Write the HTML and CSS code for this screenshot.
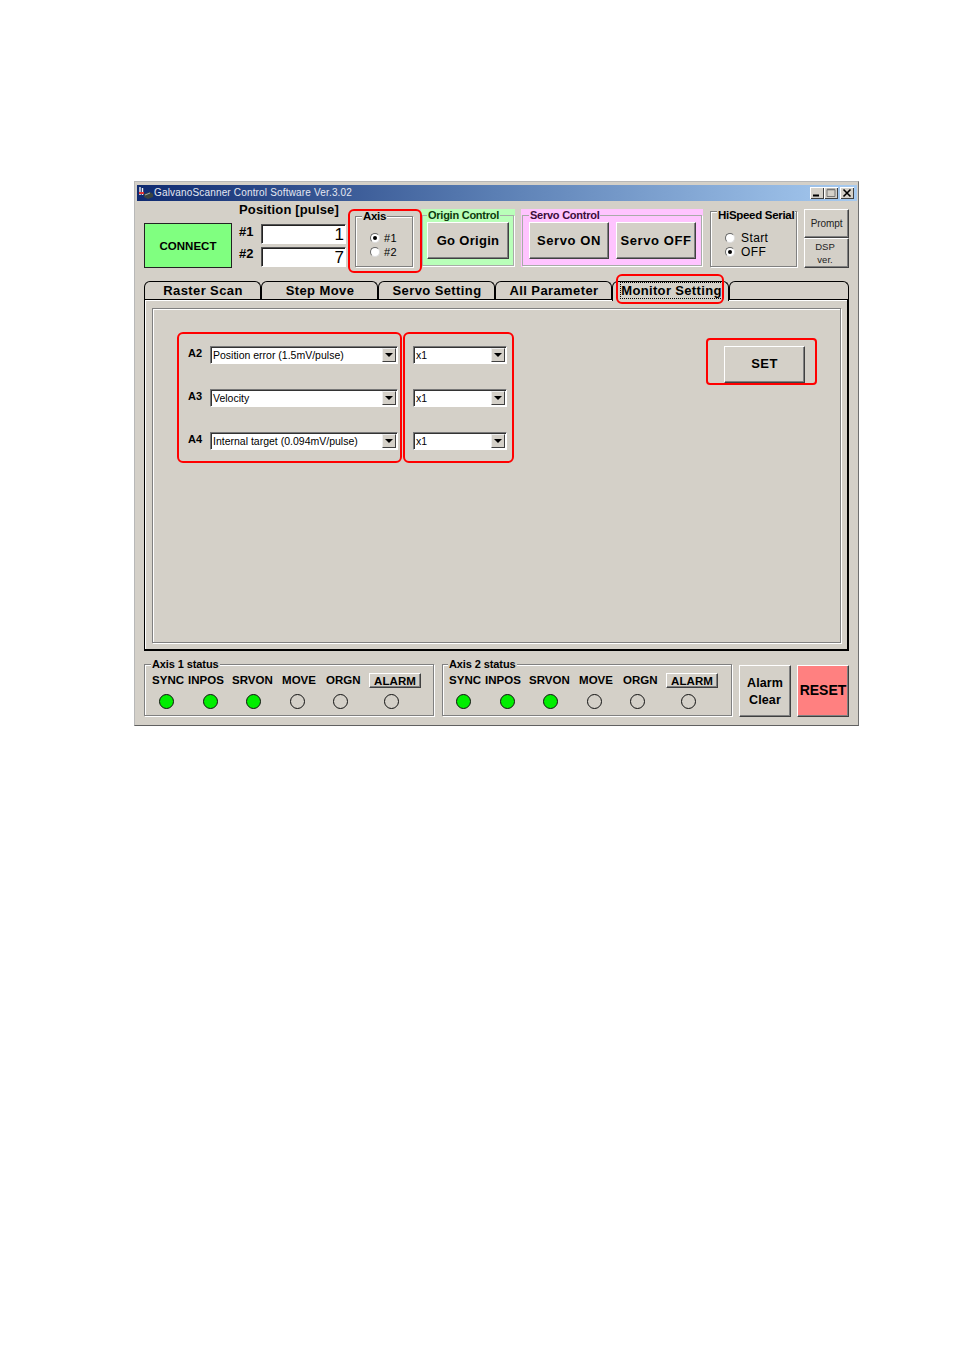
FILE: index.html
```html
<!DOCTYPE html>
<html lang="en">
<head>
<meta charset="utf-8">
<title>GalvanoScanner Control Software</title>
<link rel="stylesheet" href="styles.css">
</head>
<body>
<div class="window">
  <div class="titlebar">
    <svg class="app-icon" width="16" height="14" viewBox="0 0 16 14"><path d="M2 1v8M4.5 2v7" stroke="#f0f0f0" stroke-width="1.4"/><path d="M1 7h5" stroke="#d33" stroke-width="2"/><path d="M6 8l6-2 3 2v3l-5 2-4-2z" fill="#3c4440"/><path d="M7 9l5-2" stroke="#9aa"/></svg>
    <span class="title-text">GalvanoScanner Control Software Ver.3.02</span>
    <div class="win-btns">
      <span class="win-btn"><svg width="14" height="12" viewBox="0 0 14 12"><path d="M3 8.5h6" stroke="#000" stroke-width="2"/></svg></span>
      <span class="win-btn"><svg width="14" height="12" viewBox="0 0 14 12"><path d="M3 2.5h8v7H3z" fill="none" stroke="#777"/><path d="M3 2.5h8" stroke="#777" stroke-width="1.6"/></svg></span>
      <span class="win-btn win-close"><svg width="14" height="12" viewBox="0 0 14 12"><path d="M3.5 2.5l7 7M10.5 2.5l-7 7" stroke="#000" stroke-width="1.6"/></svg></span>
    </div>
  </div>

  <div class="top-row">
    <button class="btn connect">CONNECT</button>
    <div class="position">
      <div class="pos-title">Position [pulse]</div>
      <div class="pos-row"><span class="pos-label">#1</span><span class="field">1</span></div>
      <div class="pos-row"><span class="pos-label">#2</span><span class="field">7</span></div>
    </div>
    <div class="group axis">
      <span class="legend">Axis</span>
      <div class="radio-row"><span class="radio on"></span>#1</div>
      <div class="radio-row"><span class="radio"></span>#2</div>
    </div>
    <div class="tint tint-green">
      <div class="group tint-group">
        <span class="legend legend-green">Origin Control</span>
        <button class="btn big go-origin">Go Origin</button>
      </div>
    </div>
    <div class="tint tint-pink">
      <div class="group tint-group servo">
        <span class="legend legend-pink">Servo Control</span>
        <button class="btn big servo-btn">Servo ON</button>
        <button class="btn big servo-btn">Servo OFF</button>
      </div>
    </div>
    <div class="group hispeed">
      <span class="legend">HiSpeed Serial</span>
      <div class="radio-row big-radio"><span class="radio"></span>Start</div>
      <div class="radio-row big-radio"><span class="radio on"></span>OFF</div>
    </div>
    <div class="side-btns">
      <button class="btn small prompt">Prompt</button>
      <button class="btn small dsp">DSP<br>ver.</button>
    </div>
  </div>

  <div class="tabs">
    <div class="tab">Raster Scan</div>
    <div class="tab">Step Move</div>
    <div class="tab">Servo Setting</div>
    <div class="tab">All Parameter</div>
    <div class="tab active"><span class="focus">Monitor Setting</span></div>
    <div class="tab filler"></div>
  </div>

  <div class="panel">
    <div class="inner">
      <div class="selects">
        <span class="sel-label">A2</span>
        <div class="select"><span class="sel-text">Position error (1.5mV/pulse)</span><span class="arrow"></span></div>
        <div class="select"><span class="sel-text">x1</span><span class="arrow"></span></div>
        <span class="sel-label">A3</span>
        <div class="select"><span class="sel-text">Velocity</span><span class="arrow"></span></div>
        <div class="select"><span class="sel-text">x1</span><span class="arrow"></span></div>
        <span class="sel-label">A4</span>
        <div class="select"><span class="sel-text">Internal target (0.094mV/pulse)</span><span class="arrow"></span></div>
        <div class="select"><span class="sel-text">x1</span><span class="arrow"></span></div>
      </div>
      <button class="btn set">SET</button>
    </div>
  </div>

  <div class="status-row">
    <div class="group status">
      <span class="legend">Axis 1 status</span>
      <div class="st-labels"><span>SYNC</span><span>INPOS</span><span>SRVON</span><span>MOVE</span><span>ORGN</span><button class="btn alarm">ALARM</button></div>
      <div class="st-leds"><span class="led lit"></span><span class="led lit"></span><span class="led lit"></span><span class="led"></span><span class="led"></span><span class="led"></span></div>
    </div>
    <div class="group status">
      <span class="legend">Axis 2 status</span>
      <div class="st-labels"><span>SYNC</span><span>INPOS</span><span>SRVON</span><span>MOVE</span><span>ORGN</span><button class="btn alarm">ALARM</button></div>
      <div class="st-leds"><span class="led lit"></span><span class="led lit"></span><span class="led lit"></span><span class="led"></span><span class="led"></span><span class="led"></span></div>
    </div>
    <button class="btn square alarm-clear">Alarm<br>Clear</button>
    <button class="btn square reset">RESET</button>
  </div>

  <span class="mark mark-axis"></span>
  <span class="mark mark-tab"></span>
  <span class="mark mark-sel"></span>
  <span class="mark mark-gain"></span>
  <span class="mark mark-set"></span>
</div>
</body>
</html>
```

FILE: styles.css
```css
* { box-sizing: border-box; }
html, body { margin: 0; height: 100%; background: #fff; }
body { padding: 181px 0 0 134px; font-family: "Liberation Sans", Arial, sans-serif; color: #000; }

.window {
  position: relative;
  width: 725px;
  height: 545px;
  background: #d4d0c8;
  border: 1px solid #b8b8b8;
  border-right-color: #707070;
  border-bottom-color: #606060;
  padding: 3px 1px 0 2px;
}

.titlebar {
  display: flex;
  align-items: center;
  height: 16px;
  padding: 0 2px 0 1px;
  background: linear-gradient(90deg, #0f2a70 0%, #5b7fb4 50%, #a6caf0 100%);
}
.app-icon { flex: none; }
.title-text { font-size: 10px; line-height: 14px; margin-top: -1px; letter-spacing: 0.17px; color: #e4e8f2; white-space: nowrap; }
.win-btns { margin-left: auto; display: flex; gap: 0; }
.win-btn {
  display: block;
  width: 14px;
  height: 12px;
  background: #d4d0c8;
  border: 0;
  box-shadow: inset 1px 1px 0 #fff, inset -1px -1px 0 #404040;
}
.win-btn svg { display: block; }
.win-close { margin-left: 2px; margin-right: 1px; }

.btn {
  display: block;
  margin: 0;
  padding: 0;
  font-family: inherit;
  font-weight: bold;
  color: #000;
  background: #d4d0c8;
  border: 1px solid;
  border-color: #fff #404040 #404040 #fff;
  box-shadow: inset -1px -1px 0 #808080;
  letter-spacing: 0.5px;
}

.top-row {
  display: flex;
  align-items: flex-end;
  height: 63px;
  margin-top: 4px;
  padding-left: 7px;
}
.connect {
  flex: none;
  width: 88px;
  height: 45px;
  background: #80ff80;
  border: 1px solid #222;
  box-shadow: none;
  font-size: 11.5px;
  letter-spacing: 0;
}
.position { flex: none; width: 107px; margin-left: 7px; align-self: flex-start; margin-top: -2px; }
.pos-title { height: 14px; margin-bottom: 7px; font-size: 13px; line-height: 14px; font-weight: bold; letter-spacing: 0.15px; white-space: nowrap; }
.pos-row { display: flex; align-items: center; justify-content: space-between; height: 20px; }
.pos-row + .pos-row { margin-top: 3px; }
.pos-row + .pos-row .pos-label { margin-top: -8px; }
.pos-label { font-size: 13px; font-weight: bold; margin-top: -5px; }
.field {
  width: 85px;
  height: 20px;
  padding-right: 1px;
  background: #fff;
  border: 1px solid;
  border-color: #555 #fff #fff #555;
  box-shadow: inset 1px 1px 0 #222;
  text-align: right;
  font-size: 17px;
  line-height: 20px;
}

.group {
  position: relative;
  flex: none;
  border: 1px solid #808080;
  box-shadow: 1px 1px 0 #fff, inset 1px 1px 0 #fff;
}
.legend {
  position: absolute;
  top: -7px;
  left: 6px;
  padding: 0 1px;
  background: #d4d0c8;
  font-size: 11.5px;
  line-height: 13px;
  font-weight: bold;
  letter-spacing: -0.3px;
  white-space: nowrap;
}
.tint-group .legend { font-size: 11px; letter-spacing: -0.25px; }
.legend-green { left: 4px; background: #b9ffb9; color: #0c3a0c; }
.tint-group .legend-pink { left: 6px; background: #ffc4ff; color: #3a0c3a; }

.axis { width: 58px; height: 51px; margin: 0 0 1px 9px; padding: 14px 0 0 14px; }
.radio-row { display: flex; align-items: center; gap: 4px; height: 14px; font-size: 11px; letter-spacing: 0.3px; }
.radio {
  position: relative;
  flex: none;
  width: 10px;
  height: 10px;
  border-radius: 50%;
  background: #fff;
  border: 1px solid;
  border-color: #666 #ddd #ddd #666;
}
.radio.on::after {
  content: "";
  position: absolute;
  top: 2px;
  left: 2px;
  width: 4px;
  height: 4px;
  border-radius: 50%;
  background: #000;
}

.tint { flex: none; height: 58px; margin-bottom: 1px; padding: 6px 1px 1px 1px; }
.tint-green { width: 94px; margin-left: 8px; background: #b9ffb9; }
.tint-pink { width: 182px; margin-left: 6px; background: #ffc4ff; }
.tint-group { height: 51px; border-color: #a8aca8; box-shadow: 1px 1px 0 #fff; }
.big { font-size: 13px; letter-spacing: 0.6px; }
.go-origin { width: 82px; height: 37px; margin: 6px 0 0 4px; letter-spacing: 0.3px; }
.servo { display: flex; gap: 7px; padding: 6px 0 0 6px; }
.servo-btn { width: 80px; height: 37px; }

.hispeed { width: 87px; height: 56px; margin: 0 0 1px 7px; padding: 19px 0 0 14px; }
.hispeed .legend { top: -3px; }
.big-radio { gap: 6px; font-size: 12px; letter-spacing: 0.4px; height: 14px; }

.side-btns { flex: none; width: 45px; margin-left: 7px; }
.small { width: 45px; font-weight: normal; font-size: 10px; letter-spacing: -0.1px; color: #222; }
.prompt { height: 29px; }
.dsp { height: 30px; line-height: 13px; font-size: 9.5px; letter-spacing: 0; padding-right: 3px; }

.tabs { display: flex; height: 19px; margin: 13px 8px 0 7px; position: relative; z-index: 1; }
.tab {
  flex: none;
  width: 117px;
  height: 19px;
  padding-left: 1px;
  border: 1px solid #000;
  border-bottom: 0;
  border-radius: 6px 6px 0 0;
  text-align: center;
  font-size: 13px;
  line-height: 17px;
  font-weight: bold;
  letter-spacing: 0.4px;
  white-space: nowrap;
}
.tab.active { height: 20px; background: #d4d0c8; letter-spacing: 0.35px; padding-left: 2px; }
.focus { outline: 1px dotted #000; outline-offset: 0; }
.tab.filler { width: 120px; }

.panel {
  height: 352px;
  margin: -1px 8px 0 7px;
  padding: 8px 6px 8px 7px;
  border: 1px solid #000;
  border-right-width: 2px;
  border-bottom-width: 2px;
  box-shadow: inset 1px 1px 0 #fff;
}
.inner {
  display: flex;
  justify-content: space-between;
  align-items: flex-start;
  height: 335px;
  padding: 37px 35px 0 34px;
  border: 1px solid #808080;
  box-shadow: 1px 1px 0 #fff, inset 1px 1px 0 #fff;
}
.selects { display: grid; grid-template-columns: 23px 188px 109px; row-gap: 25px; align-items: center; }
.sel-label { font-size: 11px; font-weight: bold; margin: -5px 0 0 1px; }
.select {
  display: flex;
  align-items: center;
  justify-content: space-between;
  height: 18px;
  background: #fff;
  border: 1px solid;
  border-color: #777 #fff #fff #777;
  box-shadow: inset 1px 1px 0 #333;
  font-size: 10.5px;
  padding: 1px 1px 1px 2px;
}
.select:nth-child(3n) { margin-left: 15px; width: 94px; }
.sel-text { white-space: nowrap; }
.arrow {
  position: relative;
  flex: none;
  width: 14px;
  height: 14px;
  background: #d4d0c8;
  border: 1px solid;
  border-color: #eee #404040 #404040 #eee;
}
.arrow::after {
  content: "";
  position: absolute;
  top: 4px;
  left: 2px;
  border: 4px solid transparent;
  border-top: 4px solid #000;
  border-bottom: 0;
}
.set { width: 81px; height: 37px; font-size: 13px; letter-spacing: 0.4px; padding-bottom: 2px; }

.status-row { display: flex; align-items: flex-start; margin-top: 14px; padding: 0 8px 0 7px; }
.status { width: 290px; height: 52px; margin-top: -1px; margin-right: 8px; padding: 6px 0 0 7px; }
.status + .status { padding-left: 6px; }
.status .legend { font-size: 11px; letter-spacing: -0.1px; left: 6px; }
.status + .status .legend { left: 5px; }
.st-labels {
  display: grid;
  grid-template-columns: 36px 44px 50px 44px 43px 52px;
  align-items: center;
  height: 14px;
  font-size: 11.5px;
  font-weight: bold;
  letter-spacing: 0.05px;
  white-space: nowrap;
}
.alarm { width: 52px; height: 15px; margin-top: 2px; font-size: 11.5px; line-height: 12px; letter-spacing: 0.1px; }
.st-leds {
  display: grid;
  grid-template-columns: 44px 43px 44px 43px 51px 15px;
  margin: 9px 0 0 7px;
}
.led {
  display: block;
  width: 15px;
  height: 15px;
  border-radius: 50%;
  border: 1px solid #111;
}
.led.lit { background: #00ee00; }
.square { flex: none; width: 52px; height: 52px; padding-top: 1px; font-size: 12.5px; line-height: 17px; letter-spacing: 0.1px; }
.alarm-clear { margin-left: -1px; }
.reset { margin-left: 6px; padding: 0 0 2px; background: #ff8080; letter-spacing: 0; font-size: 14px; }

.mark { position: absolute; border: 2px solid #f00; border-radius: 6px; pointer-events: none; z-index: 2; }
.mark-axis { left: 213px; top: 27px; width: 74px; height: 64px; }
.mark-tab { left: 481px; top: 92px; width: 108px; height: 30px; }
.mark-sel { left: 42px; top: 150px; width: 225px; height: 131px; }
.mark-gain { left: 268px; top: 150px; width: 111px; height: 131px; }
.mark-set { left: 571px; top: 156px; width: 111px; height: 47px; border-radius: 4px; }
```
